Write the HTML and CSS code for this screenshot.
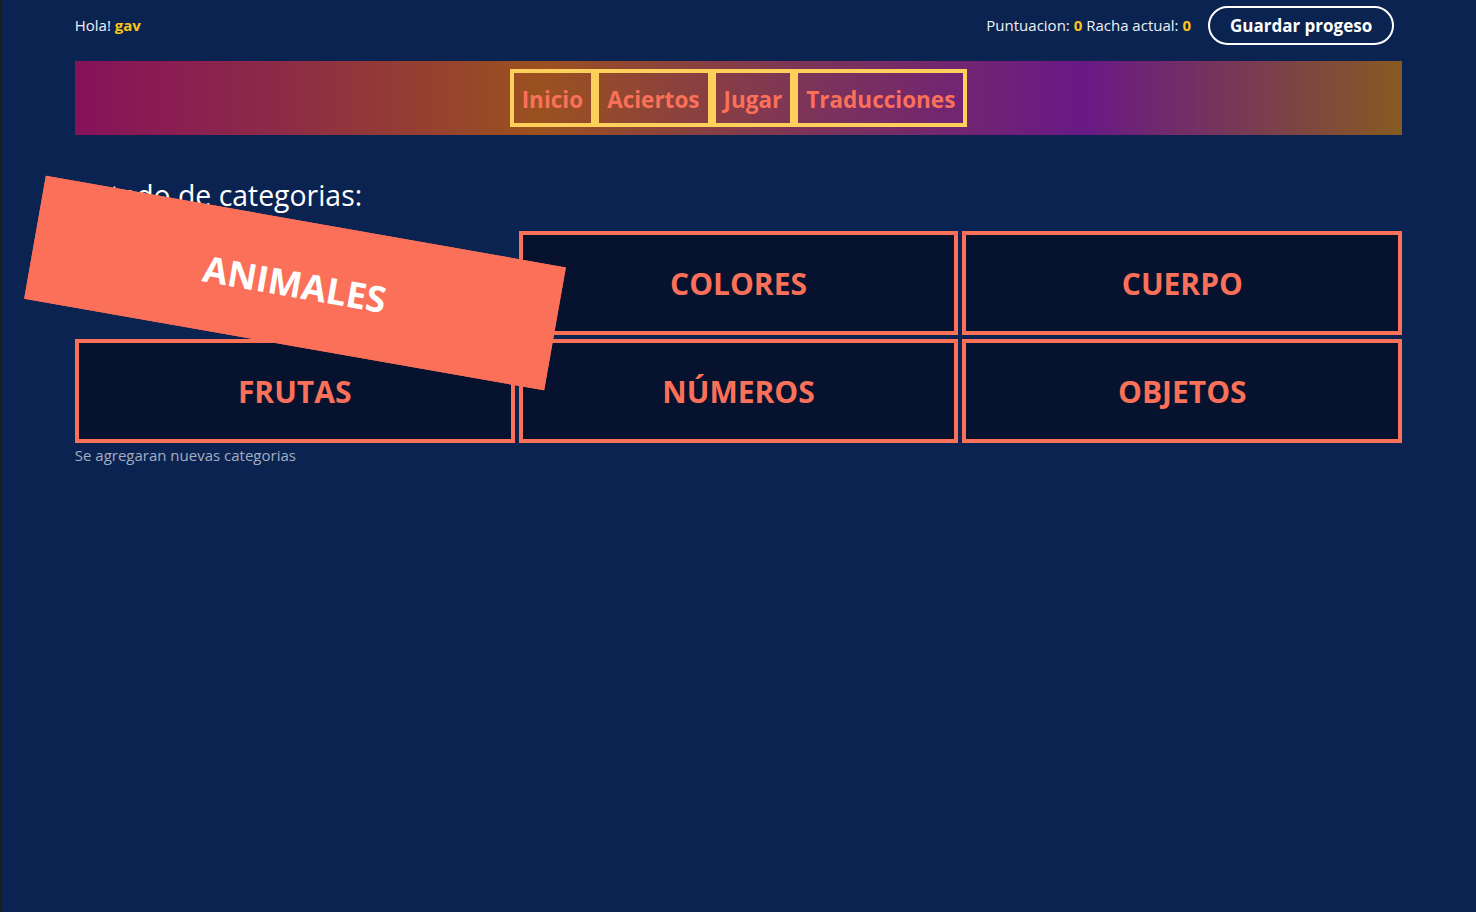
FILE: index.html
```html
<!DOCTYPE html>
<html lang="es">
<head>
<meta charset="utf-8">
<title>Categorias</title>
<link rel="stylesheet" href="styles.css">
</head>
<body>
<div class="page">
  <header class="topbar">
    <div class="greet">Hola! <strong class="hl">gav</strong></div>
    <div class="stats">
      <span class="score">Puntuacion: <strong class="hl">0</strong> Racha actual: <strong class="hl">0</strong></span>
      <button class="save">Guardar progeso</button>
    </div>
  </header>
  <nav class="nav">
    <div class="menu">
      <a class="item">Inicio</a>
      <a class="item">Aciertos</a>
      <a class="item">Jugar</a>
      <a class="item">Traducciones</a>
    </div>
  </nav>
  <main class="content">
    <h2 class="title">Listado de categorias:</h2>
    <div class="grid">
      <div class="card active">ANIMALES</div>
      <div class="card">COLORES</div>
      <div class="card">CUERPO</div>
      <div class="card">FRUTAS</div>
      <div class="card">NÚMEROS</div>
      <div class="card">OBJETOS</div>
    </div>
    <p class="note">Se agregaran nuevas categorias</p>
  </main>
</div>
</body>
</html>
```
FILE: styles.css
```css
* { box-sizing: border-box; }
html, body { margin: 0; padding: 0; }
body {
  background: #0b2350;
  color: #eef1f6;
  font-family: "Open Sans", "Noto Sans", sans-serif;
  min-height: 912px;
  border-left: 1px solid #1c1c1c;
}
.page {
  width: 90%;
  margin: 0 auto;
}
.topbar {
  display: flex;
  justify-content: space-between;
  align-items: center;
  height: 51px;
  padding-bottom: 1px;
  font-size: 15px;
}
.hl { color: #fcc419; font-weight: 700; }
.stats {
  display: flex;
  align-items: center;
  gap: 17px;
  margin-right: 8px;
}
.save {
  background: transparent;
  color: #fff;
  border: 2px solid #fff;
  border-radius: 20px;
  height: 39px;
  padding: 0 20px;
  font-family: inherit;
  font-size: 17px;
  font-weight: 700;
}
.nav {
  margin-top: 10px;
  height: 74px;
  display: flex;
  justify-content: center;
  align-items: center;
  background: linear-gradient(90deg, #86125a 0%, #8d2a48 15%, #9b511e 35%, #7d3458 55%, #691986 76%, #875a22 100%);
}
.menu {
  display: flex;
}
.item {
  border: 4px solid #fdd05b;
  height: 58px;
  padding: 2px 8px 0;
  display: flex;
  align-items: center;
  color: #fb7059;
  font-size: 22.5px;
  font-weight: 700;
}
.content {
  padding-top: 39px;
}
.title {
  margin: 0 0 15px;
  font-size: 28.4px;
  font-weight: 400;
  line-height: 42px;
  color: #fff;
}
.grid {
  display: grid;
  grid-template-columns: repeat(3, 1fr);
  gap: 4px;
}
.card {
  height: 104px;
  border: 4px solid #fb7059;
  background: #06122e;
  color: #fb7059;
  display: flex;
  align-items: center;
  justify-content: center;
  font-size: 30px;
  font-weight: 700;
}
.card.active {
  background: #fb7059;
  color: #fff;
  transform: scale(1.2) rotate(10deg);
}
.note {
  margin: 2px 0 0;
  font-size: 15px;
  color: #a3aec2;
}
```
